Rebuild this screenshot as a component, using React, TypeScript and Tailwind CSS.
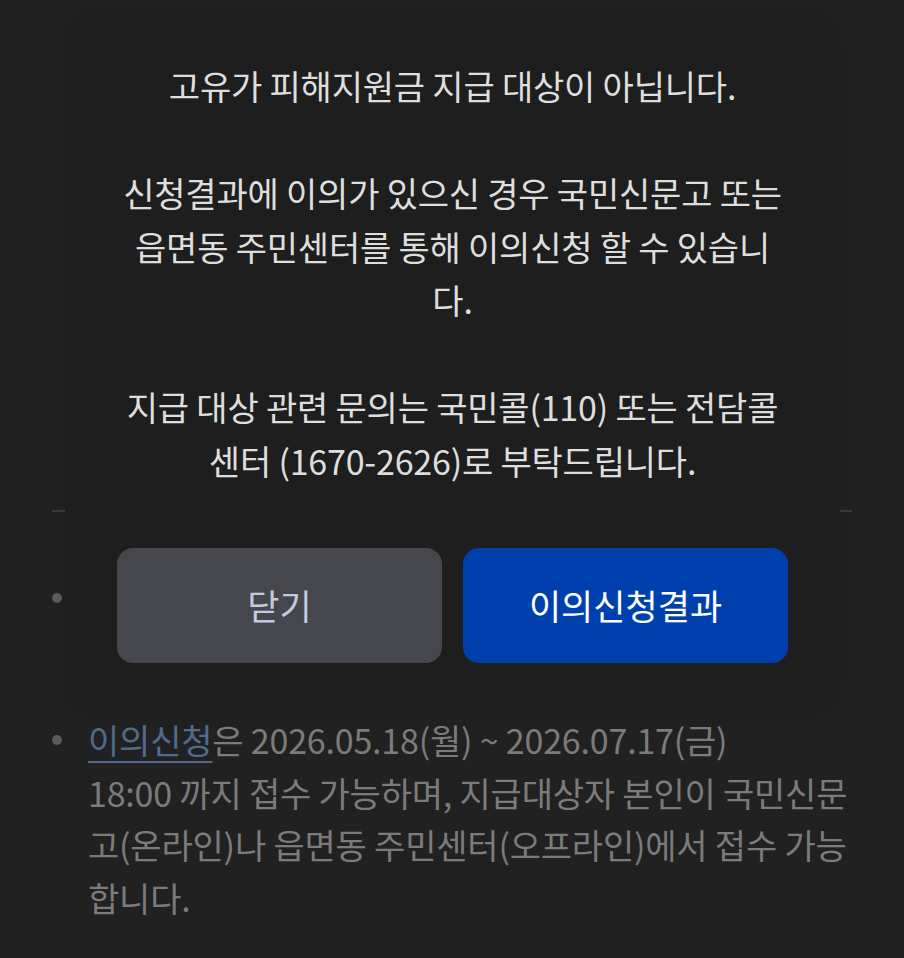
import React from 'react';

const font = "font-['Noto_Sans_CJK_KR','Noto_Sans',sans-serif]";

function Bullet() {
    return <span className="mt-[21px] h-[10px] w-[10px] shrink-0 rounded-full bg-[#5b5c61]" />;
}

export default function App() {
    return (
        <div className={`relative min-h-[958px] overflow-hidden bg-[#212121] ${font}`}>
            {/* Page behind the dialog */}
            <div className="px-[52px]">
                <div className="h-[510px]" />
                <div className="h-[2px] bg-[#3a3a3c]" />

                <ul className="flex flex-col gap-[37px] pt-[60px]">
                    {/* covered by the dialog */}
                    <li className="flex h-[105px] gap-[26px]">
                        <Bullet />
                    </li>
                    <li className="flex gap-[26px]">
                        <Bullet />
                        <p className="text-[34px] leading-[52.5px] tracking-[-0.2px] text-[#7b7b7b] whitespace-nowrap">
                            <a className="text-[#4e6b8c] underline decoration-[2px] underline-offset-[7px]">이의신청</a>
                            은 2026.05.18(월) ~ 2026.07.17(금)
                            <br />
                            18:00 까지 접수 가능하며, 지급대상자 본인이 국민신문
                            <br />
                            고(온라인)나 읍면동 주민센터(오프라인)에서 접수 가능
                            <br />
                            합니다.
                        </p>
                    </li>
                </ul>
            </div>

            {/* Dialog */}
            <div className="absolute left-[65px] top-[10px] w-[775px] rounded-[36px] bg-[#1e1e1e] px-[52px] pb-[52px] pt-[49px] shadow-[0_0_16px_rgba(0,0,0,0.12)]">
                <p className="text-center text-[34px] leading-[53.5px] tracking-[-0.2px] text-[#dedede] whitespace-nowrap">
                    고유가 피해지원금 지급 대상이 아닙니다.
                    <br />
                    <br />
                    신청결과에 이의가 있으신 경우 국민신문고 또는
                    <br />
                    읍면동 주민센터를 통해 이의신청 할 수 있습니
                    <br />
                    다.
                    <br />
                    <br />
                    지급 대상 관련 문의는 국민콜(110) 또는 전담콜
                    <br />
                    센터 (1670-2626)로 부탁드립니다.
                </p>

                <div className="mt-[61px] flex gap-[21px]">
                    <button className="flex h-[115px] flex-1 items-center justify-center rounded-[16px] bg-[#46474c] text-[35px] font-normal text-[#c3cadf]">
                        닫기
                    </button>
                    <button className="flex h-[115px] flex-1 items-center justify-center rounded-[16px] bg-[#0040ad] text-[35px] font-normal text-white">
                        이의신청결과
                    </button>
                </div>
            </div>
        </div>
    );
}
